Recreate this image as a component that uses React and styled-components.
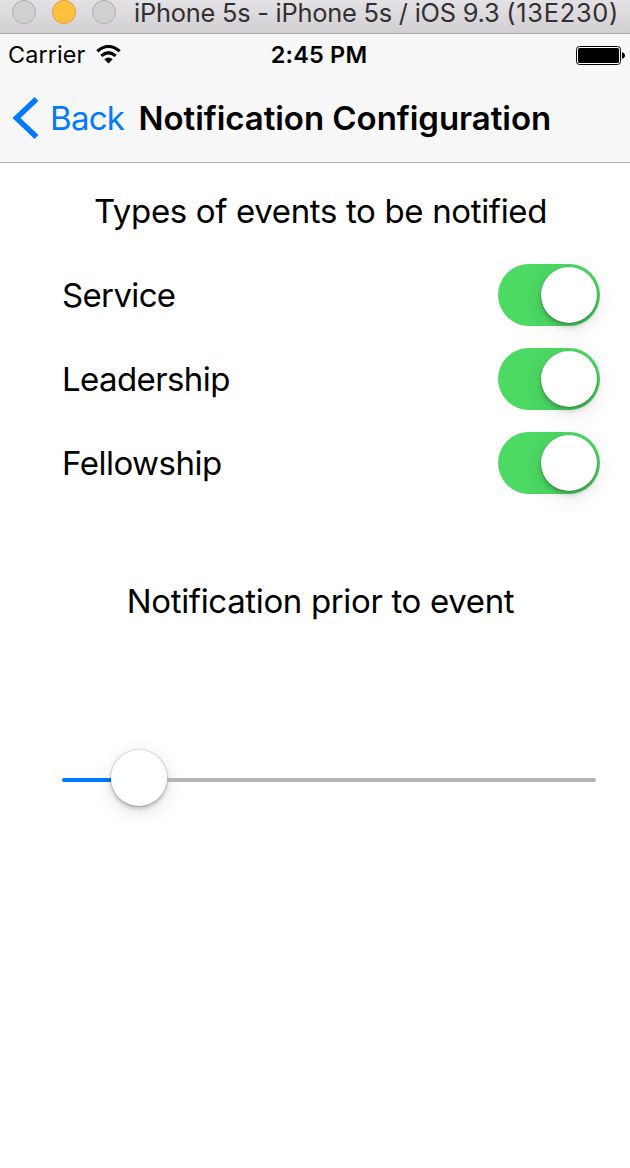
import React from 'react';
import styled, { createGlobalStyle } from 'styled-components';

const Global = createGlobalStyle`
  * { box-sizing: border-box; }
  body { margin: 0; background: #fff; color: #000; font-family: Inter, "Liberation Sans", sans-serif; font-kerning: normal; }
`;

const Screen = styled.div`
  width: 630px;
  height: 1168px;
  overflow: hidden;
  display: flex;
  flex-direction: column;
`;

const Text = styled.span`
  display: block;
  flex: none;
  white-space: nowrap;
  font-size: ${p => p.$size || 33}px;
  font-weight: ${p => p.$weight || 400};
  letter-spacing: ${p => p.$track || 0}px;
  color: ${p => p.$color || '#000'};
  line-height: 42px;
`;

const WindowBar = styled.header`
  height: 34px;
  flex: none;
  display: flex;
  align-items: flex-start;
  padding-left: 12px;
  background: linear-gradient(#e4e2e4, #d1cfd1);
  border-bottom: 1px solid #b0aeb0;
`;

const Lights = styled.div`
  display: flex;
  gap: 16px;
  margin-right: 18px;
`;

const Light = styled.i`
  width: 24px;
  height: 24px;
  border-radius: 50%;
  background: ${p => (p.$active ? '#ffbf3f' : '#d0d0d0')};
  border: 1px solid ${p => (p.$active ? '#e2a033' : '#b0b0b0')};
`;

const WindowTitle = styled(Text)`
  line-height: 26px;
`;

const BuildNumber = styled.span`
  letter-spacing: 0.7px;
`;

const Header = styled.div`
  flex: none;
  height: 129px;
  background: #f7f7f7;
  border-bottom: 1px solid #b2b2b2;
`;

const StatusBar = styled.div`
  height: 41px;
  display: grid;
  grid-template-columns: 1fr auto 1fr;
  align-items: center;
  padding: 0 5px 0 8px;
`;

const Carrier = styled.div`
  display: flex;
  align-items: center;
  gap: 11px;
`;

const Clock = styled(Text)`
  padding-left: 5px;
`;

const Battery = styled.svg`
  justify-self: end;
`;

const NavBar = styled.nav`
  height: 85px;
  display: flex;
  align-items: center;
  padding-left: 12px;
`;

const Back = styled.div`
  display: flex;
  align-items: center;
  gap: 11px;
  width: 126.5px;
`;

const Content = styled.main`
  display: flex;
  flex-direction: column;
`;

const Heading = styled.div`
  display: flex;
  justify-content: center;
  padding-left: 11px;
  margin-top: ${p => p.$top}px;
`;

const Rows = styled.div`
  display: flex;
  flex-direction: column;
  gap: 22px;
  margin-top: 32px;
  padding: 0 30px 0 62px;
`;

const Row = styled.div`
  height: 62px;
  display: flex;
  align-items: center;
  justify-content: space-between;
`;

const Switch = styled.div`
  width: 102px;
  height: 62px;
  padding: 3px;
  border-radius: 31px;
  display: flex;
  justify-content: flex-end;
  background: #4cd964;
`;

const Knob = styled.div`
  flex: none;
  width: 56px;
  height: 56px;
  border-radius: 50%;
  background: #fff;
  box-shadow: ${p => p.$slider
    ? '0 0 1px 1px rgba(0,0,0,.12), 0 3px 4px rgba(0,0,0,.2), 0 5px 20px rgba(0,0,0,.13)'
    : '0 1px 2px rgba(0,0,0,.25), 0 4px 5px rgba(0,0,0,.15), 0 5px 22px rgba(0,0,0,.12)'};
`;

const Slider = styled.div`
  height: 56px;
  margin: 128px 34px 0 62px;
  display: flex;
  align-items: center;
`;

const Track = styled.div`
  height: 4px;
  margin-top: 4px;
  ${p => (p.$filled ? 'width: 49px;' : 'flex: 1;')}
  background: ${p => (p.$filled ? '#007aff' : '#b5b5b5')};
  border-radius: ${p => (p.$filled ? '2px 0 0 2px' : '0 2px 2px 0')};
`;

const options = [
  { name: 'Service', track: -0.65 },
  { name: 'Leadership', track: -0.6 },
  { name: 'Fellowship', track: -0.5 },
];

export default function App() {
  return (
    <Screen>
      <Global />
      <WindowBar>
        <Lights><Light /><Light $active /><Light /></Lights>
        <WindowTitle $size={25.4} $track={-0.23} $color="#333033">
          iPhone 5s - iPhone 5s / iOS 9.3 <BuildNumber>(13E230)</BuildNumber>
        </WindowTitle>
      </WindowBar>
      <Header>
        <StatusBar>
          <Carrier>
            <Text $size={23.4} $track={0.1}>Carrier</Text>
            <svg width="26" height="20" viewBox="0 0 26 20">
              <path d="M1.300 6.300Q12.500-3.400 23.700 6.300" fill="none" stroke="#000" strokeWidth="3.200" />
              <path d="M5.300 10.900Q12.500 4.600 19.700 10.900" fill="none" stroke="#000" strokeWidth="3.200" />
              <path d="M8.300 14.200Q12.500 10.600 16.700 14.200L12.500 18.500z" />
            </svg>
          </Carrier>
          <Clock $size={23.5} $weight={600} $track={0.2}>2:45 PM</Clock>
          <Battery width="49" height="19" viewBox="0 0 49 19">
            <rect x=".5" y=".5" width="44" height="18" rx="3" fill="#fff" stroke="#000" />
            <rect x="2" y="2" width="41" height="15" rx="1.5" />
            <path d="M46 6.300c4 .8 4 5.600 0 6.400z" />
          </Battery>
        </StatusBar>
        <NavBar>
          <Back>
            <svg width="27" height="42" viewBox="0 0 27 42">
              <path d="M24.500 2 4.500 21l20 19" fill="none" stroke="#007aff" strokeWidth="5.500" />
            </svg>
            <Text $color="#007aff" $track={-0.7}>Back</Text>
          </Back>
          <Text $weight={600} $track={-0.05}>Notification Configuration</Text>
        </NavBar>
      </Header>
      <Content>
        <Heading $top={27}><Text $track={-0.35}>Types of events to be notified</Text></Heading>
        <Rows>
          {options.map(o => (
            <Row key={o.name}>
              <Text $track={o.track}>{o.name}</Text>
              <Switch><Knob /></Switch>
            </Row>
          ))}
        </Rows>
        <Heading $top={86}><Text $track={-0.35}>Notification prior to event</Text></Heading>
        <Slider><Track $filled /><Knob $slider /><Track /></Slider>
      </Content>
    </Screen>
  );
}
